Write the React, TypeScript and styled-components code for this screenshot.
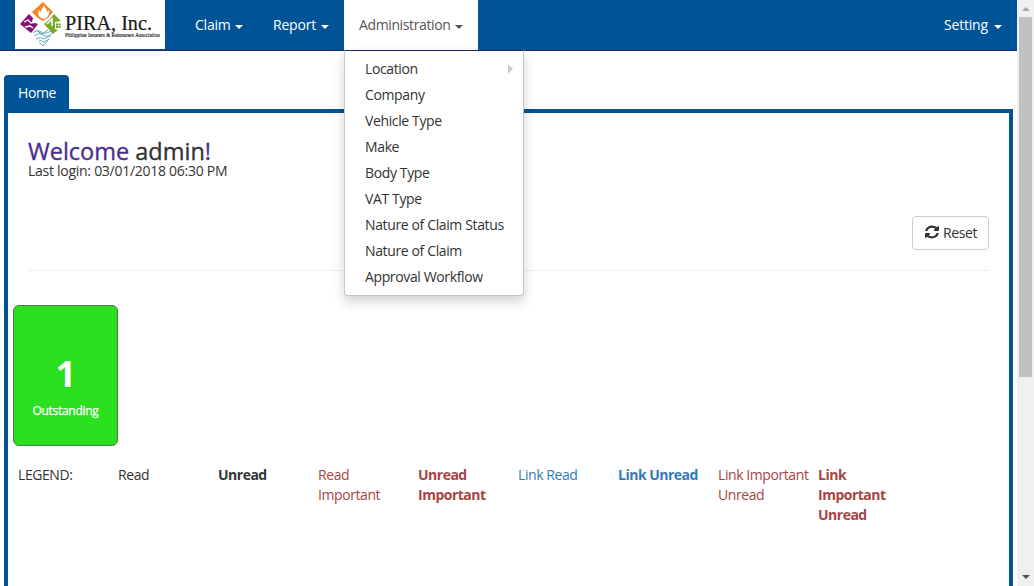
import React from "react";
import styled, { createGlobalStyle, css } from "styled-components";

const BLUE = "#005496";
const FONT = '"Segoe UI", "Open Sans", "Noto Sans", sans-serif';

const GlobalStyle = createGlobalStyle`
  *, *::before, *::after { box-sizing: border-box; }
  html, body, #root { height: 100%; }
  body {
    margin: 0;
    overflow: hidden;
    background: #fff;
    color: #333;
    font: 14px/20px ${FONT};
    letter-spacing: -0.37px;
  }
`;

const Window = styled.div`
  display: flex;
  height: 586px;
  overflow: hidden;
`;

const Page = styled.div`
  flex: 1;
  min-width: 0;
  display: flex;
  flex-direction: column;
`;

const Navbar = styled.nav`
  display: flex;
  flex: none;
  height: 51px;
  padding-left: 15px;
  background: ${BLUE};
  border-bottom: 1px solid #24246a;
`;

const Brand = styled.a`
  display: block;
  width: 150px;
  height: 49px;
  margin-right: 15px;
  background: #fff;
`;

const NavItem = styled.div<{ $open?: boolean; $right?: boolean }>`
  position: relative;
  display: flex;
  align-items: center;
  height: 50px;
  padding: 0 15px;
  color: ${(p) => (p.$open ? "#555" : "#fff")};
  background: ${(p) => (p.$open ? "#fff" : "transparent")};
  ${(p) => p.$right && css`margin-left: auto;`}
`;

const NavLabel = styled.span<{ $width: number; $tracking?: number }>`
  flex: none;
  width: ${(p) => p.$width}px;
  letter-spacing: ${(p) => p.$tracking ?? -0.2}px;
  white-space: nowrap;
`;

const Caret = styled.span`
  margin: 3px 0 0 6px;
  border-top: 4px solid;
  border-left: 4px solid transparent;
  border-right: 4px solid transparent;
`;

const Dropdown = styled.ul`
  position: absolute;
  top: 50px;
  left: 0;
  z-index: 10;
  width: 180px;
  margin: 0;
  padding: 5px 0;
  list-style: none;
  color: #333;
  background: #fff;
  border: 1px solid rgba(0, 0, 0, 0.22);
  border-top-color: #24246a;
  border-radius: 0 0 4px 4px;
  box-shadow: 0 6px 12px rgba(0, 0, 0, 0.18);
`;

const MenuItem = styled.li`
  display: flex;
  align-items: center;
  justify-content: space-between;
  height: 26px;
  padding: 0 10px 0 20px;
  white-space: nowrap;
`;

const SubmenuArrow = styled.span`
  border-left: 5px solid #ccc;
  border-top: 5px solid transparent;
  border-bottom: 5px solid transparent;
`;

const Tabs = styled.div`
  display: flex;
  flex: none;
  padding: 24px 4px 0;
`;

const Tab = styled.div`
  width: 65px;
  height: 34px;
  padding: 8px 14px;
  color: #fff;
  background: ${BLUE};
  border-radius: 4px 4px 0 0;
`;

const Panel = styled.main`
  flex: 1;
  margin: 0 4px;
  border: solid ${BLUE};
  border-width: 4px 4px 0;
`;

const Header = styled.header`
  display: flex;
  flex-direction: column;
  height: 158px;
  margin: 0 20px;
  padding-top: 26px;
  border-bottom: 1px solid #eee;
`;

const Greeting = styled.h1`
  margin: 0;
  height: 22px;
  color: #483090;
  font-size: 23.5px;
  line-height: 25px;
  font-weight: 500;
  letter-spacing: 0;
  -webkit-text-stroke: 0.35px;
  b { color: #333; font-weight: 500; }
`;

const LastLogin = styled.div`
  line-height: 20px;
  letter-spacing: -0.27px;
`;

const ResetButton = styled.button`
  display: flex;
  align-items: center;
  align-self: flex-end;
  gap: 4px;
  width: 77px;
  height: 34px;
  margin-top: 35px;
  padding: 0 12px;
  color: #333;
  background: #fff;
  border: 1px solid #ccc;
  border-radius: 4px;
  font: inherit;
  letter-spacing: inherit;
  svg { flex: none; margin-top: -2px; }
`;

const StatusCard = styled.section`
  display: flex;
  flex-direction: column;
  align-items: center;
  width: 105px;
  height: 141px;
  margin: 34px 0 0 5px;
  padding-top: 48px;
  color: #fff;
  background: #2be01f;
  border: 1px solid #4c7a45;
  border-radius: 6px;
`;

const Count = styled.strong`
  font-size: 36px;
  line-height: 40px;
  font-weight: 700;
`;

const CardLabel = styled.span`
  margin-top: 7px;
  font-size: 12px;
  letter-spacing: -0.3px;
  -webkit-text-stroke: 0.25px;
`;

const Legend = styled.div`
  display: grid;
  grid-template-columns: repeat(9, 100px);
  margin: 19px 0 0 10px;
`;

const LegendItem = styled.span<{ $color?: string; $bold?: boolean }>`
  color: ${(p) => p.$color ?? "#333"};
  font-weight: ${(p) => (p.$bold ? 700 : 400)};
  letter-spacing: ${(p) => (p.$bold ? -0.5 : -0.42)}px;
  white-space: pre-line;
`;

const Scrollbar = styled.aside`
  display: flex;
  flex-direction: column;
  align-items: center;
  flex: none;
  width: 17px;
  background: #f0f0f0;
`;

const ScrollArrow = styled.span<{ $down?: boolean }>`
  border: 4px solid transparent;
  ${(p) =>
    p.$down
      ? css`border-top-color: #505050; border-bottom: 0; margin: auto 0 7px;`
      : css`border-bottom-color: #a3a3a3; border-top: 0; margin: 7px 0 6px;`}
`;

const Thumb = styled.span`
  width: 13px;
  height: 360px;
  background: #c1c1c1;
`;

const Logo = () => (
  <svg width="150" height="49" viewBox="0 0 150 49" aria-label="PIRA, Inc.">
    <path d="M28 2 38 12 33 18 28 21 23 18 17 12Z" fill="#f58220" />
    <path d="M29 4c0 4 3 4 3 8l2-2c1 4-1 8-5 9-5-1-7-5-5-9l2 2c0-4 3-4 3-8Z" fill="#fff" />
    <path d="M14 14 18 18 17 22 23 24 20 28 16 33 5 24Z" fill="#84147a" />
    <path d="M9 22l4-2 3 3 5-1M10 27l5-1 3 2" fill="none" stroke="#fff" strokeWidth="1.3" />
    <path d="M39 14 46 21 40 22 40 29 43 30 38 34 29 24 34 20Z" fill="#78ac2c" />
    <path d="M32 24l5-5v7" fill="none" stroke="#fff" strokeWidth="1.5" />
    <path d="M41 24.500h2M43.500 24.500h2M41 27h2M43.500 27h2" stroke="#67a51f" strokeWidth="2" />
    <g fill="none" stroke="#4197a9" strokeWidth=".8">
      <path d="M18 33q4-4 8-1t10-1M19 36q5-4 9-1t9-2M21 39q4-3 7 0l8-3M22 31l5 3 6-4" />
      <path d="m24 42 4 4 6-7M24 40l5 2 5-3" />
    </g>
    <text x="50" y="30" fill="#181818" stroke="#181818" strokeWidth=".2" fontFamily='"Liberation Serif", serif' fontSize="20" textLength="87" lengthAdjust="spacingAndGlyphs" letterSpacing="0">PIRA, Inc.</text>
    <text x="50" y="37" fill="#111" stroke="#111" strokeWidth=".12" fontFamily='"Liberation Serif", serif' fontSize="5.500" textLength="95" lengthAdjust="spacingAndGlyphs" letterSpacing="0">Philippine Insurers &amp; Reinsurers Association</text>
  </svg>
);

const RefreshIcon = () => (
  <svg width="14" height="14" viewBox="0 0 1536 1664" preserveAspectRatio="none" fill="currentColor" aria-hidden="true">
    <path transform="translate(0 64)" d="M1511 928q0 5-1 7-64 268-268 434.500T764 1536q-146 0-282.500-55T238 1324l-129 129q-19 19-45 19t-45-19-19-45V960q0-26 19-45t45-19h448q26 0 45 19t19 45-19 45l-137 137q71 66 161 102t187 36q134 0 250-65t186-179q11-17 53-117 8-23 30-23h192q13 0 22.500 9.500t9.500 22.500zm25-800v448q0 26-19 45t-45 19h-448q-26 0-45-19t-19-45 19-45l138-138Q969 256 768 256q-134 0-250 65T332 500q-11 17-53 117-8 23-30 23H50q-13 0-22.500-9.500T18 608v-7q65-268 270-434.500T768 0q146 0 284 55.500T1297 212l130-129q19-19 45-19t45 19 19 45z" />
  </svg>
);

const menu = ["Location", "Company", "Vehicle Type", "Make", "Body Type", "VAT Type", "Nature of Claim Status", "Nature of Claim", "Approval Workflow"];

const legend: { text: string; color?: string; bold?: boolean }[] = [
  { text: "LEGEND:" },
  { text: "Read" },
  { text: "Unread", bold: true },
  { text: "Read\nImportant", color: "#a94442" },
  { text: "Unread\nImportant", color: "#a94442", bold: true },
  { text: "Link Read", color: "#337ab7" },
  { text: "Link Unread", color: "#337ab7", bold: true },
  { text: "Link Important\nUnread", color: "#a94442" },
  { text: "Link\nImportant\nUnread", color: "#a94442", bold: true },
];

export default function App() {
  return (
    <>
      <GlobalStyle />
      <Window>
        <Page>
          <Navbar>
            <Brand><Logo /></Brand>
            <NavItem><NavLabel $width={34}>Claim</NavLabel><Caret /></NavItem>
            <NavItem><NavLabel $width={42}>Report</NavLabel><Caret /></NavItem>
            <NavItem $open>
              <NavLabel $width={90} $tracking={-0.38}>Administration</NavLabel><Caret />
              <Dropdown>
                {menu.map((label, i) => (
                  <MenuItem key={label}>{label}{i === 0 && <SubmenuArrow />}</MenuItem>
                ))}
              </Dropdown>
            </NavItem>
            <NavItem $right><NavLabel $width={44}>Setting</NavLabel><Caret /></NavItem>
          </Navbar>
          <Tabs><Tab>Home</Tab></Tabs>
          <Panel>
            <Header>
              <Greeting>Welcome <b>admin</b>!</Greeting>
              <LastLogin>Last login: 03/01/2018 06:30 PM</LastLogin>
              <ResetButton><RefreshIcon />Reset</ResetButton>
            </Header>
            <StatusCard>
              <Count>1</Count>
              <CardLabel>Outstanding</CardLabel>
            </StatusCard>
            <Legend>
              {legend.map((item, i) => (
                <LegendItem key={i} $color={item.color} $bold={item.bold}>{item.text}</LegendItem>
              ))}
            </Legend>
          </Panel>
        </Page>
        <Scrollbar>
          <ScrollArrow />
          <Thumb />
          <ScrollArrow $down />
        </Scrollbar>
      </Window>
    </>
  );
}
